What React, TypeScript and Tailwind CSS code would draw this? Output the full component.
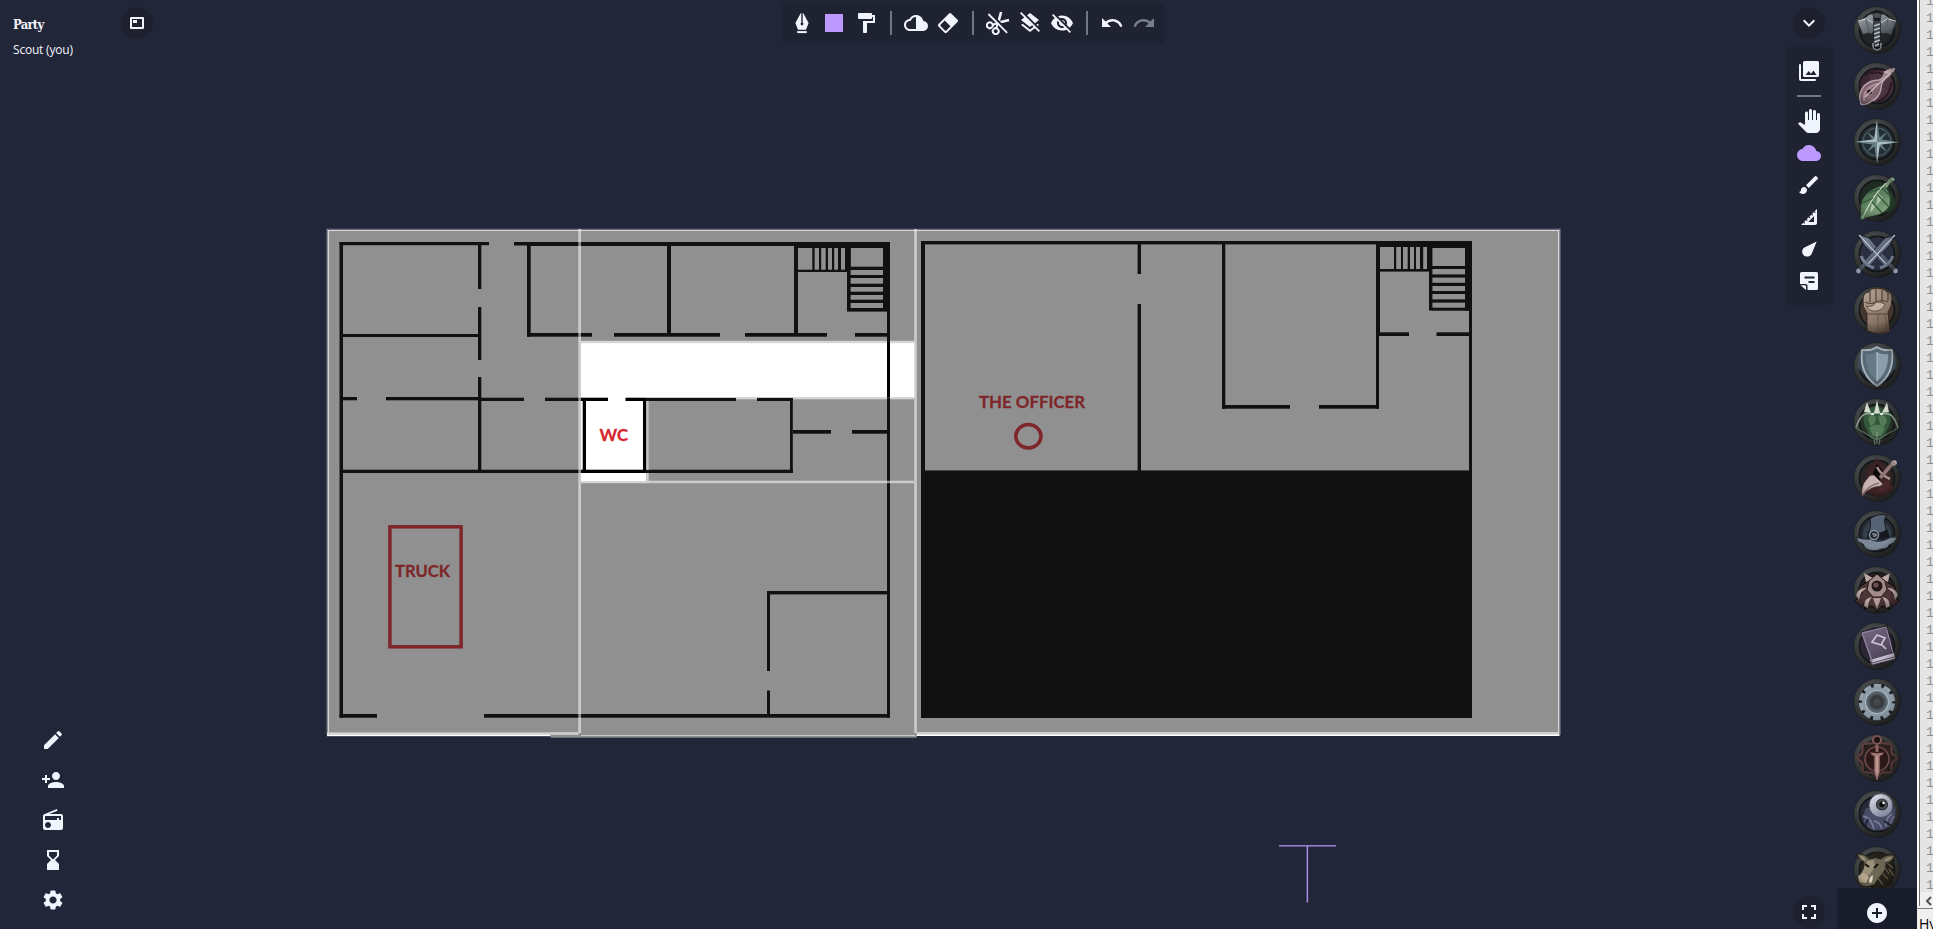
import React from "react";
import {
  MdAddCircle,
  MdBrush,
  MdCloud,
  MdEdit,
  MdExpandMore,
  MdFormatPaint,
  MdFullscreen,
  MdHourglassBottom,
  MdLayersClear,
  MdPanTool,
  MdPersonAdd,
  MdRadio,
  MdRedo,
  MdSettings,
  MdSquare,
  MdSquareFoot,
  MdUndo,
  MdVisibilityOff,
} from "react-icons/md";

type Box = [number, number, number, number];

/* Wall segments as x1, y1, x2, y2 */
const WALLS: Box[] = [
  // ground floor: outer shell
  [339.5, 242, 489, 245.2], [514, 242, 530, 245.5], [527, 242, 890, 246], [339.5, 242, 343, 717.7],
  [887, 242, 890, 717.7], [339.5, 714, 377, 717.7], [484, 714, 890, 717.7],
  // ground floor: west rooms
  [340, 334, 481, 337], [340, 397, 357, 400.3], [386, 397, 481, 400.3], [478, 397.7, 524, 401],
  [545, 397.7, 608, 401], [340, 469.7, 793, 473],
  [478, 242, 481.3, 289], [478, 307, 481.3, 360], [478, 377, 481.3, 472],
  // ground floor: north rooms
  [527, 242, 530.7, 336.7], [527, 333, 592, 336.7], [614, 333, 720, 336.7], [745, 333, 827, 336.7],
  [855, 333, 888, 336.7], [667, 242, 671, 335], [794, 242, 798, 335],
  // ground floor: centre rooms
  [582.7, 398, 586, 472], [643, 398, 646, 473], [625.5, 397.7, 736, 401], [757, 397.7, 792.7, 401],
  [790, 397.7, 792.8, 473], [793, 430, 831, 433.7], [852, 430, 888, 433.7],
  // ground floor: south east room
  [767, 591, 888, 594.4], [767, 591, 770, 671], [767, 690.5, 770, 716],
  // ground floor: stairs
  [794, 242, 890, 248], [812.3, 247, 814.6, 270], [819, 247, 821.2, 270], [825.7, 247, 828, 270],
  [832, 247, 834.2, 270], [838, 247, 841, 270], [845, 247, 850.6, 270], [797, 269.7, 850, 272],
  [847, 247, 850.6, 311.6], [883, 242, 890, 311], [850, 266.7, 884, 270], [850, 275, 884, 278],
  [850, 283.7, 884, 287], [850, 291.7, 884, 295], [850, 299.7, 884, 303], [850, 308, 888, 311.6],
  // upper floor: shell
  [921, 241, 1472, 244.4], [921, 241, 925, 718], [1469, 241, 1472, 718], [921, 470.4, 1472, 718],
  // upper floor: rooms
  [1137.6, 242, 1141, 274], [1137.6, 304, 1141, 471], [1222, 242, 1225.3, 408.7],
  [1222, 405, 1290, 408.7], [1319, 405, 1379, 408.7], [1376, 242, 1380, 335], [1376, 242, 1379, 408.7],
  [1379, 332.3, 1409, 336], [1436.5, 332.3, 1470, 336],
  // upper floor: stairs
  [1376, 241, 1472, 247], [1427, 241, 1472, 248], [1394, 246, 1396.2, 269], [1401, 246, 1403, 269],
  [1407.7, 246, 1410, 269], [1414, 246, 1416, 269], [1420, 246, 1423.2, 269], [1427, 246, 1432, 270],
  [1379, 269, 1431, 271.6], [1429, 247, 1432.4, 310.6], [1465, 241, 1472, 310.6],
  [1432, 266, 1466, 269], [1432, 274.4, 1466, 277.6], [1432, 282.8, 1466, 286], [1432, 291, 1466, 294],
  [1432, 299.4, 1466, 302.6], [1432, 307.7, 1470, 310.7],
];

function Rects({ items }: { items: Box[] }) {
  return (
    <>
      {items.map(([a, b, c, d], i) => (
        <rect key={i} x={a} y={b} width={c - a} height={d - b} />
      ))}
    </>
  );
}

function Plan({ wall, floor, red }: { wall: string; floor: string; red: string }) {
  return (
    <g>
      <rect x="327" y="229" width="1233" height="507" fill={floor} />
      <g fill={wall}>
        <Rects items={WALLS} />
      </g>
      <rect x="389.9" y="526.8" width="71.2" height="120" fill="none" stroke={red} strokeWidth="3.5" />
      <ellipse cx="1028.4" cy="436.3" rx="12.6" ry="11.7" fill="none" stroke={red} strokeWidth="3.5" />
      <g fill={red} stroke={red} strokeWidth="0.3" fontFamily="Lato, 'Open Sans', sans-serif" fontWeight="700" fontSize="17.4">
        <text x="599.5" y="441.2" textLength="28.5" lengthAdjust="spacingAndGlyphs">WC</text>
        <text x="395" y="576.6" textLength="55" lengthAdjust="spacingAndGlyphs">TRUCK</text>
        <text x="979" y="407.5" textLength="106" lengthAdjust="spacingAndGlyphs">THE OFFICER</text>
      </g>
    </g>
  );
}

function MapCanvas() {
  return (
    <svg className="absolute inset-0" width="1933" height="929" viewBox="0 0 1933 929">
      <defs>
        <clipPath id="revealed">
          <rect x="581" y="343" width="333.5" height="54.5" />
          <rect x="581" y="397" width="65" height="84" />
        </clipPath>
      </defs>
      <rect x="326.3" y="228.6" width="1234.6" height="506.6" fill="#5c5f6b" />
      <Plan wall="#111111" floor="#909090" red="#7e262a" />
      <g clipPath="url(#revealed)">
        <Plan wall="#000000" floor="#ffffff" red="#d5272d" />
      </g>
      <rect x="328.5" y="230.5" width="1230" height="504" fill="none" stroke="#d5d6dc" />
      <rect x="327" y="229" width="1233" height="1" fill="#6a6c77" />
      <rect x="327" y="229" width="1" height="505" fill="#8b8c94" />
      <rect x="1559" y="229" width="1" height="505" fill="#8b8c94" />
      <g fill="#ffffff" fillOpacity="0.54">
        <rect x="578.3" y="229" width="2.7" height="506" />
        <rect x="914.2" y="229" width="2.6" height="508" />
        <rect x="646" y="480.7" width="268" height="2.5" />
      </g>
      <g fill="#d6d6d6">
        <rect x="579" y="340.8" width="308" height="2.4" />
        <rect x="890" y="340.8" width="24.2" height="2.4" />
        <rect x="736" y="397.1" width="21" height="2.2" />
        <rect x="793" y="397.1" width="94" height="2.2" />
        <rect x="890" y="397.1" width="24" height="2.2" />
        <rect x="646" y="397" width="147" height="0.8" />
        <rect x="646.4" y="401" width="2.2" height="69" fillOpacity="0.75" />
        <rect x="646.4" y="473" width="2.2" height="8" />
        <rect x="581" y="481" width="66" height="2.2" />
      </g>
      <rect x="327" y="732.4" width="252" height="2.4" fill="#d4d4d4" />
      <rect x="327" y="734.8" width="223.5" height="1.4" fill="#ffffff" />
      <rect x="550.5" y="733" width="366" height="4.7" fill="#8e8f91" />
      <rect x="581" y="735" width="334" height="1" fill="#c9c9c9" />
      <rect x="550.5" y="732.6" width="28" height="2.2" fill="#cfcfcf" />
      <rect x="917" y="732" width="642" height="2.6" fill="#d0d0d0" />
      <rect x="917" y="734.6" width="642" height="1.4" fill="#ffffff" />
      <rect x="1279" y="845" width="57" height="1.6" fill="#957ccf" />
      <rect x="1306.6" y="846" width="1.5" height="56.5" fill="#a88ae6" />
    </svg>
  );
}

/* ---------- custom icons ---------- */

function Icon({ children, className = "" }: { children: React.ReactNode; className?: string }) {
  return (
    <svg className={className} width="24" height="24" viewBox="0 0 24 24" fill="currentColor">
      {children}
    </svg>
  );
}

const PenTipIcon = () => (
  <Icon>
    <path fillRule="evenodd" d="M11.300 2v9.700a1.400 1.400 0 1 0 1.400 0V2l.8.400L18.600 12 16 18.800H8L5.400 12l5.100-9.600z" />
    <path d="M7.200 20.100h9.600v2H7.200z" />
  </Icon>
);

const HalfCloudIcon = () => (
  <Icon>
    <path
      fillRule="evenodd"
      d="M19.35 10.04C18.67 6.59 15.64 4 12 4 9.11 4 6.6 5.64 5.35 8.04 2.34 8.36 0 10.91 0 14c0 3.31 2.69 6 6 6h13c2.76 0 5-2.24 5-5 0-2.64-2.05-4.78-4.65-4.96zM12 18H6c-2.21 0-4-1.79-4-4 0-2.05 1.53-3.76 3.56-3.97l1.07-.11.5-.95C8.08 7.14 9.94 6 12 6z"
    />
  </Icon>
);

const EraserIcon = () => (
  <Icon>
    <g transform="rotate(-45 12 12)">
      <path fillRule="evenodd" d="M4.500 6h15a1.500 1.500 0 0 1 1.500 1.500v9a1.500 1.500 0 0 1-1.500 1.500h-15A1.800 1.800 0 0 1 2.700 16.200V7.800A1.800 1.800 0 0 1 4.500 6zM5.600 7.900a1 1 0 0 0-1 1v6.200a1 1 0 0 0 1 1h5.800V7.900z" />
    </g>
  </Icon>
);

const CutOffIcon = () => (
  <Icon>
    <mask id="cut-mask">
      <rect width="24" height="24" fill="#fff" />
      <path d="M3.500 1.500L23 21" stroke="#000" strokeWidth="2" />
    </mask>
    <g mask="url(#cut-mask)">
      <g transform="rotate(-45 12 12)" fill="none" stroke="currentColor" strokeWidth="2">
        <circle cx="4.600" cy="7.800" r="2.900" />
        <circle cx="4.600" cy="16.200" r="2.900" />
        <path d="M7 9.500L12 12M7 14.500l5-2.500" />
        <path d="M14 11l8-4.600M14 13l8 4.600" strokeWidth="2.600" />
      </g>
    </g>
    <path d="M2.400 3L21.200 21.800" stroke="currentColor" strokeWidth="1.800" />
  </Icon>
);

const GalleryIcon = () => (
  <Icon>
    <path fillRule="evenodd" d="M7.500 2h13A1.500 1.500 0 0 1 22 3.500v13a1.500 1.500 0 0 1-1.500 1.500h-13A1.500 1.500 0 0 1 6 16.500v-13A1.500 1.500 0 0 1 7.500 2zM8.500 16h11l-3-4.500-2.500 3.300-2.200-2.800z" />
    <path d="M3 6v14a1 1 0 0 0 1 1h14" fill="none" stroke="currentColor" strokeWidth="2" strokeLinecap="round" />
  </Icon>
);

const PointerIcon = () => (
  <Icon>
    <path d="M19.100 4.700c.3-.2.600.1.400.4l-4.900 11.800c-1.300 2.900-5.500 3.700-7.900 1.300-2.400-2.300-2-6.100.8-7.700z" />
  </Icon>
);

const NoteIcon = () => (
  <Icon>
    <path fillRule="evenodd" d="M4.500 3h15A1.500 1.500 0 0 1 21 4.500v15a1.500 1.500 0 0 1-1.500 1.500H10.500v-4.500a1.500 1.500 0 0 0-1.500-1.500H3V4.500A1.500 1.500 0 0 1 4.500 3zM7.500 7.500v2h10v-2zM11.500 12v2h6v-2z" />
    <path d="M3.500 16.300L9 21V17.300a1 1 0 0 0-1-1z" />
  </Icon>
);

const PartyToggleIcon = () => (
  <Icon>
    <path fillRule="evenodd" d="M6 6h12a1 1 0 0 1 1 1v10a1 1 0 0 1-1 1H6a1 1 0 0 1-1-1V7a1 1 0 0 1 1-1zM7 8v8h10V8z" />
    <path d="M8 9h4v3H8z" />
  </Icon>
);

/* ---------- tokens ---------- */

interface TokenArt {
  name: string;
  inner: string;
  art: React.ReactNode;
}

const TOKENS: TokenArt[] = [
  {
    name: "Hammer",
    inner: "#202426",
    art: (
      <>
        <circle cx="24" cy="14" r="10" fill="#191c1e" />
        <path d="M18 9q6-4 12 0-2 3-6 3t-6-3" fill="#4b5155" />
        <path d="M4 15l9-4q4-4 7-3l1 7h6l1-7q3-1 7 3l9 4-6 14q-4-3-9-1-3-6-5-6t-5 6q-5-2-9 1z" fill="url(#steel)" stroke="#22272b" strokeWidth=".8" />
        <path d="M5 15l9-2 6 4h8l6-4 9 2" stroke="#ccd3d8" strokeWidth="1" fill="none" />
        <path d="M13 13l3 12M35 13l-3 12" stroke="#5a636a" strokeWidth="1.500" />
        <path d="M20.500 16h7l-1 25h-5z" fill="#454b50" stroke="#191c1e" strokeWidth=".8" />
        <path d="M21 20l6-2m-6 6l6-2m-6 6l6-2m-6 6l6-2m-6 6l6-2m-5 6l4-2" stroke="#b4bdc3" strokeWidth="1.500" />
        <path d="M20 37v3a4 4 0 0 0 8 0v-3" fill="none" stroke="#a3abb0" strokeWidth="1.400" />
      </>
    ),
  },
  {
    name: "Lute",
    inner: "#3c2832",
    art: (
      <>
        <path d="M16 9q12-6 22 6l2 14q-8 13-20 11z" fill="#4a3440" />
        <path d="M12 14q8-8 18-6M38 20q0 14-14 20M17 12q8-3 12 0" stroke="#2a1a22" strokeWidth="2" fill="none" />
        <path d="M8 42q-4-9 3-18 6-6 15-6 4-1 6-7l4-2 2 3-6 5q-4 4-4 10-2 9-9 12-7 5-11 3z" fill="#806470" stroke="#bfa5ae" strokeWidth="1.300" />
        <path d="M11 39q-1-8 5-13 5-4 9-4" stroke="#ae909b" strokeWidth="2" fill="none" />
        <circle cx="16.500" cy="30" r="3" fill="#24161c" stroke="#b0909c" strokeWidth=".8" />
        <path d="M12 35L40 8" stroke="#cdbac0" strokeWidth="1.200" />
        <path d="M30 10l6-3 6-1-1 4-7 2z" fill="#c3abb3" />
      </>
    ),
  },
  {
    name: "Compass",
    inner: "#232f34",
    art: (
      <>
        <circle cx="24" cy="24" r="14" fill="none" stroke="#46565c" strokeWidth="1.500" />
        <path d="M12 12l12 9 12-9-9 12 9 12-12-9-12 9 9-12z" fill="#647b82" stroke="#1c282c" strokeWidth=".6" />
        <path d="M24 2l2.800 19.200L46 24l-19.200 2.800L24 46l-2.800-19.200L2 24l19.200-2.800z" fill="#6a8087" />
        <path d="M24 2v22H2l19.200-2.800zM24 46V24h22l-19.200 2.800z" fill="#aabcc0" />
      </>
    ),
  },
  {
    name: "Leaf",
    inner: "#1e2c23",
    art: (
      <>
        <path d="M32 14q10 5 11 17-3 6-10 8-2-10-1-25z" fill="#26402d" />
        <path d="M8 46q-3-18 5-26 7-7 18-9 8 8 6 20-4 9-16 11-7 1-13 4z" fill="url(#leaf)" stroke="#162a1b" strokeWidth=".7" />
        <path d="M33 9q-13 12-23 34" stroke="#c3d6bf" strokeWidth="1.300" fill="none" />
        <path d="M25 19l-2 13 7-8zM19 28l-2 11 6-7z" fill="#c9dbc5" opacity=".7" />
        <path d="M29 14l8 8M24 20l11 12M19 28l10 11M27 15l-12 4M20 24l-11 5" stroke="#2f5436" strokeWidth="1.200" />
        <path d="M31 12l5-7 4-2 2 3-5 3-3 5z" fill="#7d9778" />
      </>
    ),
  },
  {
    name: "Swords",
    inner: "#2a3040",
    art: (
      <>
        <path d="M5 4l11 4 22 24-5 6L11 15z" fill="url(#blade)" stroke="#1b1f2b" strokeWidth="1" />
        <path d="M43 4L32 8 10 32l5 6L37 15z" fill="url(#blade)" stroke="#1b1f2b" strokeWidth="1" />
        <path d="M6 5l28 30M42 5L14 35" stroke="#bcc4d4" strokeWidth="1.100" />
        <path d="M8 26q3 9 13 12M40 26q-3 9-13 12" stroke="#747c90" strokeWidth="3.200" fill="none" />
        <path d="M12 34l-6 6M36 34l6 6" stroke="#565d6e" strokeWidth="3.600" />
        <circle cx="5.500" cy="41" r="2.400" fill="#8f97a9" />
        <circle cx="42.500" cy="41" r="2.400" fill="#8f97a9" />
      </>
    ),
  },
  {
    name: "Fist",
    inner: "#43362e",
    art: (
      <>
        <path d="M14 27q-5-6-4-13 0-8 6-8l2-3 6-1 6 1 5 3q4 0 4 7 0 8-4 13l2 19q-12 5-23 0z" fill="url(#skin)" stroke="#392a22" strokeWidth="1" />
        <path d="M17 5v11M23 3v13M29 4v12M35 6v9M12 16q6 3 11 0t12 0M15 28h20" stroke="#54423a" strokeWidth="1.200" fill="none" />
        <path d="M13 20q7 2 10-4 5 0 9 2-2 6-9 7-6 1-10-5z" fill="#c3b3a4" stroke="#54423a" strokeWidth=".8" />
        <path d="M25 29v16M32 29l2 14" stroke="#6b5649" strokeWidth="1" />
      </>
    ),
  },
  {
    name: "Shield",
    inner: "#262e35",
    art: (
      <>
        <path d="M8 13q-5 10 3 18M40 13q5 10-3 18M5 18l5 4M43 18l-5 4M5 25l6 3M43 25l-6 3" stroke="#3d4c58" strokeWidth="3" fill="none" />
        <path d="M24 5q6 4 15 3 3 24-15 36Q6 32 9 8q9 1 15-3z" fill="#596a77" stroke="#a9b6c0" strokeWidth="1.800" />
        <path d="M24 10q5 3 11 2 1 17-11 27z" fill="#8b9caa" />
        <path d="M24 10q-5 3-11 2-1 17 11 27z" fill="#667987" />
        <path d="M24 10v29" stroke="#b6c3cc" strokeWidth="1" />
      </>
    ),
  },
  {
    name: "Bow",
    inner: "#26312a",
    art: (
      <>
        <path d="M12 14q5-6 12-5t12 5q4 9-2 18l-4 9H18l-4-9q-6-9-2-18z" fill="#34573c" />
        <path d="M15 20q4-6 8-1 0 8-6 9zM25 18q6-3 9 4-1 7-6 7zM16 30q8-7 16 0l-4 8h-8z" fill="#547b57" />
        <path d="M3 30Q8 13 17 16l7-1 7 1q9-3 14 14" fill="none" stroke="#8fa28f" strokeWidth="1.700" />
        <path d="M3 30l21 12 21-12" fill="none" stroke="#73886f" strokeWidth="1" />
        <path d="M14 4l4 11-7-1zM24 2l3 13h-6zM34 4l2 10-7 1z" fill="#d3dccf" />
        <path d="M18 16h3M27 16h3" stroke="#dfe6db" strokeWidth="2" />
        <path d="M24 34v12M21 41l1 6M27 41l-1 6" stroke="#869b83" strokeWidth="1.200" />
      </>
    ),
  },
  {
    name: "Dagger",
    inner: "#2b2425",
    art: (
      <>
        <path d="M24 4l12 13 3 21-14 6-14-7 3-21z" fill="#3b2325" />
        <path d="M24 10l7 8-4 8-9-2z" fill="#0b0808" />
        <path d="M33 26l8 7-6 7-12-3z" fill="#46272a" />
        <path d="M9 43q-2-11 5-18 3-5 7-4l9 9q-2 3-8 3-8 2-13 10z" fill="#c7b3b0" stroke="#3e2a2b" strokeWidth=".7" />
        <path d="M10 41q4-9 16-12" stroke="#8a716f" strokeWidth="1.300" fill="none" />
        <path d="M24 13q4 8 13 12" stroke="#a98f8c" strokeWidth="2.500" fill="none" />
        <path d="M27 24l13-15" stroke="#8f7573" strokeWidth="3.600" />
        <circle cx="41" cy="9" r="2.800" fill="#c2aca8" />
      </>
    ),
  },
  {
    name: "Hat",
    inner: "#252b34",
    art: (
      <>
        <circle cx="24" cy="24" r="14" fill="#343e4a" />
        <path d="M17 9q7-6 17-4-4 4-2 10l4 14H14q5-12 3-20z" fill="#566374" stroke="#181d26" strokeWidth="1" />
        <path d="M15 21q10 5 19-2l3 9-23 3z" fill="#15181e" />
        <path d="M3 27q7 3 14 2 6 4 15 1 6-4 12-3-1 6-8 8-1 4-7 4-10 4-17-1l-2-4-5-2z" fill="#7d8998" stroke="#212a36" strokeWidth="1" />
        <circle cx="21" cy="25" r="4.500" fill="#1f242c" stroke="#8793a3" strokeWidth="1.500" />
        <path d="M19 24h4v2h-3" stroke="#b4bcc8" fill="none" />
      </>
    ),
  },
  {
    name: "Beast",
    inner: "#271f21",
    art: (
      <>
        <path d="M12 8l7 3 5-4 5 4 7-3-2 8 9 6-5 4 8 9-6 6-5-6 2 8-8-3-5 6-5-6-8 3 2-8-5 6-6-6 8-9-5-4 9-6z" fill="#4c3537" stroke="#120d0e" strokeWidth="1" />
        <path d="M11 7l9 5-7 4zM37 7l-9 5 7 4zM3 29q3-8 11-7-7 3-8 12zM45 29q-3-8-11-7 7 3 8 12zM11 40q0-8 8-9-4 4-4 11zM37 40q0-8-8-9 4 4 4 11z" fill="#bba8a5" />
        <path d="M24 8l8 7 2 9-6 7h-8l-6-7 2-9z" fill="#a18a88" stroke="#2a1b1d" strokeWidth="1" />
        <circle cx="24" cy="20" r="5.500" fill="#221618" />
        <circle cx="23" cy="19" r="2.600" fill="#6a4d50" />
        <path d="M20 32l4 11 4-11z" fill="#b19b98" />
      </>
    ),
  },
  {
    name: "Book",
    inner: "#2a2633",
    art: (
      <>
        <path d="M8 10l26-6 7 27-23 9z" fill="url(#cover)" stroke="#251f2e" strokeWidth="1" />
        <path d="M17 38l24-7 1 6-23 6z" fill="#c9c2d0" />
        <path d="M18 39l1 4 23-6M19 41l22-6" stroke="#5b5069" strokeWidth=".9" fill="none" />
        <path d="M9 11l10 28" stroke="#8d819a" strokeWidth="1.500" />
        <path d="M24 13l8 3-4 7-9-3zM28 22l5 5" fill="none" stroke="#cbc3d2" strokeWidth="1.700" />
        <path d="M9 11l24-6 7 26" fill="none" stroke="#988da5" strokeWidth=".9" />
      </>
    ),
  },
  {
    name: "Gear",
    inner: "#2a2e30",
    art: (
      <>
        <circle cx="24" cy="24" r="16.300" fill="none" stroke="#93a2ad" strokeWidth="4" strokeDasharray="7.500 2.741" strokeDashoffset="-1.400" />
        <circle cx="24" cy="24" r="15" fill="#8b9aa6" />
        <circle cx="24" cy="24" r="11.500" fill="#5c6870" stroke="#adb9c1" strokeWidth="1.200" />
        <circle cx="24" cy="24" r="8" fill="#353b3f" stroke="#4a535a" strokeWidth="2" />
        <circle cx="24" cy="24" r="3.500" fill="#45494b" />
      </>
    ),
  },
  {
    name: "Sword",
    inner: "#2b2020",
    art: (
      <>
        <path d="M24 5l5 4 9 1 1 9 5 5-5 5-1 9-9 1-5 4-5-4-9-1-1-9-5-5 5-5 1-9 9-1z" fill="none" stroke="#593c3b" strokeWidth="2.500" />
        <circle cx="24" cy="25" r="12" fill="#2b1819" stroke="#6f4b49" strokeWidth="1.600" />
        <circle cx="24" cy="6" r="4" fill="#1f1213" stroke="#7e5a57" strokeWidth="2" />
        <path d="M22.500 11h3v7h-3z" fill="#8d6663" />
        <path d="M17 18q7 2 14 0-1 4-4 4v17l-3 8-3-8V22q-3 0-4-4z" fill="#a37b76" stroke="#3c1f20" strokeWidth=".7" />
        <path d="M24 22v24" stroke="#cdb0a8" strokeWidth="1.200" />
      </>
    ),
  },
  {
    name: "Eye",
    inner: "#262936",
    art: (
      <>
        <path d="M13 18q-7 14 4 21 10 4 20-2 8-9 5-20z" fill="#494c66" />
        <path d="M10 26q9 2 11 14M21 31q6 1 8 8M39 24q-7 4-6 13M41 26q-3 4-4 10" stroke="#757996" strokeWidth="1.800" fill="none" />
        <path d="M15 29l-3 8M31 31l8 5" stroke="#20222f" strokeWidth="2" />
        <circle cx="28" cy="15.500" r="12" fill="url(#eyeball)" stroke="#4b4e65" strokeWidth="1" />
        <circle cx="29" cy="14.500" r="5.500" fill="#4b4f55" stroke="#2d3035" strokeWidth="1.200" />
        <circle cx="29" cy="14.500" r="2.700" fill="#08090b" />
        <circle cx="30.500" cy="13" r="1.200" fill="#fff" />
      </>
    ),
  },
  {
    name: "Boar",
    inner: "#292723",
    art: (
      <>
        <path d="M20 7l5-2 4 4 7-1 6 6-3 6 4 7-4 4 1 6-8 5-12 1z" fill="#24201a" />
        <path d="M4 8q8-1 12 5 7-3 12 0 5-5 14-4-2 7-9 8 1 6-3 10l-4 5-5 7-8 2q-8-1-9-9l6-9 1-7Q5 14 4 8z" fill="#6e6654" stroke="#211e18" strokeWidth="1" />
        <path d="M6 9q6 1 7 6-5-1-7-6zM31 15q3-4 9-5-3 5-9 5z" fill="#998e78" />
        <path d="M14 15l7-1 1 7-5 7-6 5-5 0 4-8z" fill="#9b907a" />
        <path d="M5 30l6-3 5 4-3 6-6-1z" fill="#b5a78e" />
        <path d="M12 18l4 3M25 18l-4 4" stroke="#16130f" strokeWidth="2" />
        <path d="M16 36q0-5 4-7 0 5-2 8z" fill="#ddd5c2" />
        <path d="M31 20l5 8M28 26l7 7M25 32l5 7M34 17l6 5M36 23l5 7" stroke="#5b5342" strokeWidth="1.300" />
      </>
    ),
  },
];

function Token({ token }: { token: TokenArt }) {
  return (
    <svg className="size-12 shrink-0" viewBox="0 0 48 48">
      <circle cx="24" cy="24" r="23.700" fill="#232629" />
      <circle cx="24" cy="24" r="20.500" fill={token.inner} stroke="url(#rim)" strokeWidth="5" />
      <circle cx="24" cy="24" r="17.600" fill="none" stroke="#141618" strokeWidth="1.600" />
      {token.art}
      <circle cx="24" cy="24" r="23.700" fill="url(#vignette)" />
    </svg>
  );
}

function TokenDefs() {
  const ramps: [string, string, string][] = [
    ["rim", "#4b4e50", "#2f3231"],
    ["steel", "#a3abb0", "#4b5359"],
    ["leaf", "#33593a", "#88a985"],
    ["blade", "#7f889b", "#465063"],
    ["skin", "#b8a797", "#796456"],
    ["cover", "#796d88", "#4a4156"],
    ["eyeball", "#e8eaf0", "#80859c"],
  ];
  return (
    <svg className="absolute size-0">
      <defs>
        {ramps.map(([id, from, to]) => (
          <linearGradient key={id} id={id} x1="0" y1="0" x2="0.600" y2="1">
            <stop offset="0" stopColor={from} />
            <stop offset="1" stopColor={to} />
          </linearGradient>
        ))}
        <radialGradient id="vignette" cx="0.460" cy="0.440" r="0.560">
          <stop offset="0.600" stopColor="#000" stopOpacity="0" />
          <stop offset="1" stopColor="#000" stopOpacity="0.380" />
        </radialGradient>
      </defs>
    </svg>
  );
}

/* ---------- chrome ---------- */

function Tool({ children, tone = "" }: { children: React.ReactNode; tone?: string }) {
  return <button className={`flex size-8 items-center justify-center ${tone}`}>{children}</button>;
}

function RoundButton({ children }: { children: React.ReactNode }) {
  return <button className="flex size-8 items-center justify-center rounded-full bg-[#1e212d]">{children}</button>;
}

const Divider = () => <div className="mx-2 h-6 w-0.5 bg-[#737684]" />;

function PartyPanel() {
  return (
    <aside className="relative flex w-[168px] flex-col justify-between">
      <div className="flex justify-between pt-[7px] pr-[15px] pl-[13px]">
        <div className="whitespace-nowrap">
          <h1 className="mt-[10px] font-['DejaVu_Serif_Condensed','DejaVu_Serif',serif] text-[13px] leading-4 font-bold tracking-[-0.8px]">Party</h1>
          <p className="mt-[9px] font-['Open_Sans',sans-serif] text-xs leading-4 tracking-[-0.2px]">Scout (you)</p>
        </div>
        <RoundButton><PartyToggleIcon /></RoundButton>
      </div>
      <nav className="mb-[13px] ml-[37px] flex flex-col gap-2">
        <Tool><MdEdit size={24} /></Tool>
        <Tool><MdPersonAdd size={24} /></Tool>
        <Tool><MdRadio size={24} /></Tool>
        <Tool><MdHourglassBottom size={24} /></Tool>
        <Tool><MdSettings size={24} /></Tool>
      </nav>
    </aside>
  );
}

function FogToolbar() {
  return (
    <div className="relative mt-[3px] ml-[614px] flex h-10 items-center self-start rounded bg-[#1f2230] px-1">
      <Tool><PenTipIcon /></Tool>
      <Tool tone="text-[#bb99ff]"><MdSquare size={24} /></Tool>
      <Tool><MdFormatPaint size={24} /></Tool>
      <Divider />
      <Tool><HalfCloudIcon /></Tool>
      <Tool><EraserIcon /></Tool>
      <Divider />
      <Tool><CutOffIcon /></Tool>
      <Tool><MdLayersClear size={24} /></Tool>
      <Tool><MdVisibilityOff size={24} /></Tool>
      <Divider />
      <Tool><MdUndo size={24} /></Tool>
      <Tool tone="text-[#7a7e8b]"><MdRedo size={24} /></Tool>
    </div>
  );
}

function SideTools() {
  return (
    <div className="relative ml-auto flex w-12 flex-col items-center pt-[7px] pb-px">
      <RoundButton><MdExpandMore size={24} /></RoundButton>
      <div className="mt-2 flex w-12 flex-col items-center rounded bg-[#1f2230] py-2">
        <Tool><GalleryIcon /></Tool>
        <div className="my-2 h-0.5 w-6 bg-[#737684]" />
        <Tool><MdPanTool size={24} /></Tool>
        <Tool tone="text-[#bb99ff]"><MdCloud size={24} /></Tool>
        <Tool><MdBrush size={24} /></Tool>
        <Tool><MdSquareFoot size={24} className="-scale-x-100" /></Tool>
        <Tool><PointerIcon /></Tool>
        <Tool><NoteIcon /></Tool>
      </div>
      <div className="mt-auto"><RoundButton><MdFullscreen size={24} /></RoundButton></div>
    </div>
  );
}

function TokenBar() {
  return (
    <div className="relative ml-1 flex w-20 flex-col">
      <TokenDefs />
      <div className="flex min-h-0 flex-1 flex-col items-center gap-2 overflow-hidden pt-[6px]">
        {TOKENS.map((t) => (
          <Token key={t.name} token={t} />
        ))}
      </div>
      <div className="flex h-[41px] shrink-0 items-center justify-center bg-[#191c2b] pt-2">
        <MdAddCircle size={24} />
      </div>
    </div>
  );
}

function EditorEdge() {
  return (
    <div className="relative flex w-4 flex-col overflow-hidden bg-[#f0f0f0] text-black">
      <div className="flex h-[910px] border-l-2 border-white">
        <div className="flex flex-1 flex-col overflow-hidden border-l border-[#696969]">
          <div className="h-[892px] overflow-hidden bg-[#e4e4e4] pl-[6px] font-['Liberation_Mono',monospace] text-[13px] leading-[17px] text-[#8e8e92]">
            <div className="-mt-[7px]">
              {Array.from({ length: 53 }, (_, i) => (
                <div key={i}>1</div>
              ))}
            </div>
          </div>
          <svg className="mt-1 ml-[4px]" width="9" height="10" viewBox="0 0 9 10" fill="none" stroke="#505050" strokeWidth="2">
            <path d="M7 1L3 5l4 4" />
          </svg>
        </div>
      </div>
      <div className="mt-0.5 border-t border-[#808080] pt-[7px] pl-[2px] font-['Open_Sans',sans-serif] text-[14px] leading-4">Hy</div>
    </div>
  );
}

export default function App() {
  return (
    <main className="relative flex h-[929px] w-[1933px] overflow-hidden bg-[#222639] text-[#f0f4fd]">
      <MapCanvas />
      <PartyPanel />
      <FogToolbar />
      <SideTools />
      <TokenBar />
      <EditorEdge />
    </main>
  );
}
